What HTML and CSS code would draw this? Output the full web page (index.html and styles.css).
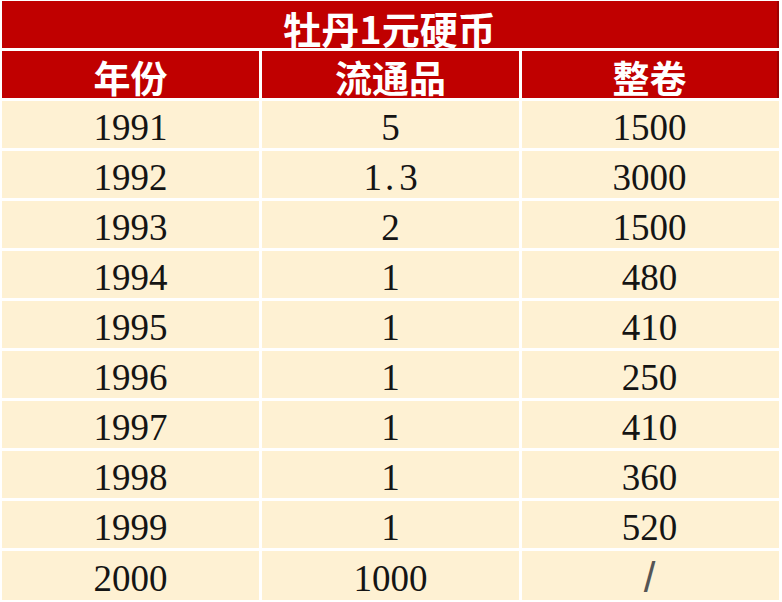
FILE: index.html
```html
<!DOCTYPE html>
<html lang="zh-CN">
<head>
<meta charset="utf-8">
<title>牡丹1元硬币</title>
<link rel="stylesheet" href="styles.css">
</head>
<body>
<table class="coins">
  <thead>
    <tr><th class="title" colspan="3">牡丹1元硬币</th></tr>
    <tr><th class="c1">年份</th><th class="c2">流通品</th><th class="c3">整卷</th></tr>
  </thead>
  <tbody>
    <tr><td>1991</td><td>5</td><td class="c3">1500</td></tr>
    <tr><td>1992</td><td>1<span class="dot">.</span>3</td><td class="c3">3000</td></tr>
    <tr><td>1993</td><td>2</td><td class="c3">1500</td></tr>
    <tr><td>1994</td><td>1</td><td class="c3">480</td></tr>
    <tr><td>1995</td><td>1</td><td class="c3">410</td></tr>
    <tr><td>1996</td><td>1</td><td class="c3">250</td></tr>
    <tr><td>1997</td><td>1</td><td class="c3">410</td></tr>
    <tr><td>1998</td><td>1</td><td class="c3">360</td></tr>
    <tr><td>1999</td><td>1</td><td class="c3">520</td></tr>
    <tr><td>2000</td><td>1000</td><td class="c3"><span class="slash">/</span></td></tr>
  </tbody>
</table>
</body>
</html>
```
FILE: styles.css
```css
html, body {
  margin: 0;
  padding: 0;
  background: #ffffff;
}
.coins {
  border-collapse: separate;
  border-spacing: 3px;
  table-layout: fixed;
  margin: -2px 0 0 -1px;
}
.coins th,
.coins td {
  padding: 6px 0 0 0;
  height: 41px;
  text-align: center;
  vertical-align: middle;
  line-height: 41px;
}
.coins th {
  background: #c00000;
  color: #ffffff;
  font-family: "Noto Sans CJK SC", sans-serif;
  font-weight: 700;
  font-size: 37px;
}
.coins th.title {
  font-size: 38px;
  border-right: 2px solid #9e0000;
}
.c1 { width: 257px; }
.c2 { width: 257px; }
.c3 { width: 255px; }
.coins th.c3 {
  border-right: 2px solid #9e0000;
}
.coins td {
  background: #fef1d3;
  color: #141414;
  font-family: "Liberation Serif", serif;
  font-size: 37px;
}
.coins td.c3 {
  border-right: 2px solid #fef1d3;
}
.dot {
  padding: 0 5px 0 3px;
}
.slash {
  font-family: "Liberation Sans", sans-serif;
  font-weight: 400;
  font-size: 42px;
  color: #555555;
}
```
